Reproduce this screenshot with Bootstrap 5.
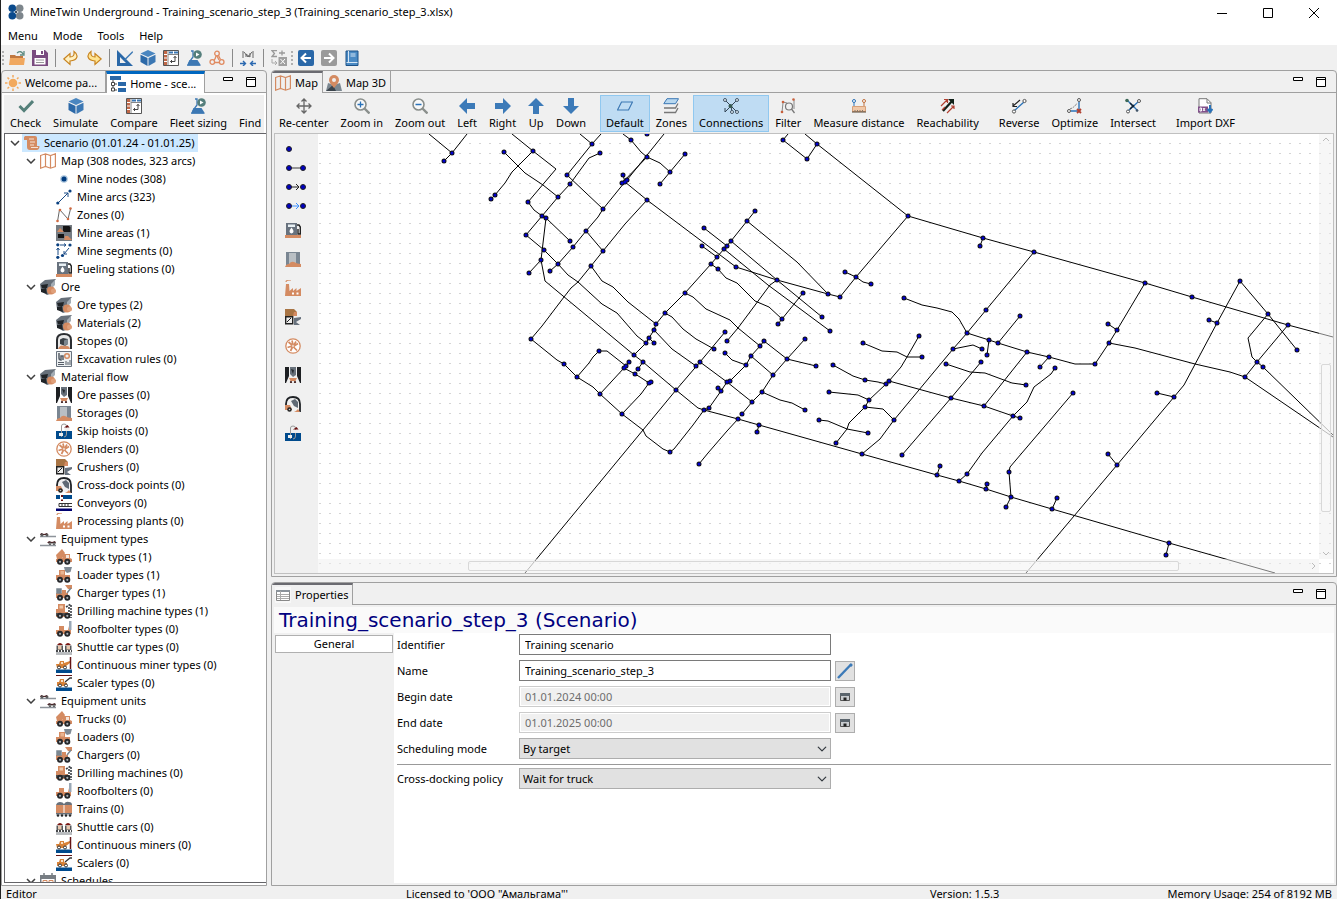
<!DOCTYPE html>
<html lang="en">
<head>
<meta charset="utf-8">
<meta name="viewport" content="width=device-width, initial-scale=1">
<title>MineTwin Underground</title>
<link href="https://cdn.jsdelivr.net/npm/bootstrap@5.3.0/dist/css/bootstrap.min.css" rel="stylesheet">
<style>
:root{--face:#f0f0f0;--edge:#a0a0a0;--accent:#0067c0;--hot:#bfdcf3}
body{font-family:"Noto Sans","Open Sans",sans-serif;font-size:11px;line-height:16px;color:#000;background:var(--face)}
.app{height:100vh;border-left:1px solid #222;overflow:hidden}
button,input,select{font:inherit;color:inherit}
.btn{--bs-btn-font-size:11px;--bs-btn-line-height:16px;--bs-btn-color:#000;--bs-btn-border-radius:0;--bs-btn-padding-x:0;--bs-btn-padding-y:0;--bs-btn-border-width:0}
.ico{width:16px;height:16px;flex:none;display:block}
.titlebar{height:24px;padding-left:7px;gap:6px}
.winbtn{width:46px;height:24px}
.menus{height:21px;padding:3px 0 0 7px;gap:15px}
.menus a{color:#000;text-decoration:none}
.mainbar{height:25px;padding-top:1px}
.mainbar .btn{width:23px;height:24px}
.vsep{width:8px;height:18px;background:linear-gradient(#8a8a8a,#8a8a8a) center/1px 100% no-repeat;flex:none}
.grip{width:4px;height:15px;flex:none;background:repeating-linear-gradient(#b0b0b0 0 2px,transparent 2px 4px) center/2px 100% no-repeat}
.work{gap:4px}
.sidepane{width:266px;flex:none}
.pane{border:1px solid var(--edge);border-radius:4px 4px 0 0;background:var(--face);min-width:0;min-height:0}
.stack{gap:5px}
.mappane{flex:507 1 0}
.proppane{flex:303 1 0}
.tabs-row{height:22px;border-bottom:1px solid var(--edge)}
.tabs-row .tab{height:22px;padding:1px 4px 0 3px;gap:4px;border-right:1px solid var(--edge)}
.sidepane .tabs-row .tab{padding-right:8px}
.tabs-row .tab.on{border-top:2px solid #6a6a70;padding-top:0;background:var(--face)}
.tabs-row .tab.blue{border-top:3px solid var(--accent);border-left:1px solid var(--edge);background:#fff}
.panebtns{gap:11px;padding-right:9px}
.cmdbar{height:40px;padding-top:2px}
.cmdbar .btn{padding:2px 5px 1px;height:37px;display:flex;flex-direction:column;align-items:center;white-space:nowrap;border:1px solid transparent}
.cmdbar .btn .ico{margin-bottom:1px}
.mapbar{padding-left:1px}
.sidepane .cmdbar{border:solid #fff;border-width:2px 2px 0}
.sidepane .cmdbar{padding-top:0}
.cmdbar .btn.on{background:var(--hot);border-color:#90c8f0}
.cmdgap{width:8px;flex:none}
.treebox{border:1px solid #646468;border-right:0;background:#fff;margin:0 0 2px 2px}
.treewrap{background:#fff}
.tree,.tree ul{list-style:none;margin:0;padding:0}
.tree .item{height:18px;display:flex;align-items:center;white-space:nowrap}
.tree .item>.ico{margin-right:5px}
.tree .btn{width:12px;height:16px;margin-right:3px;display:flex;align-items:center;justify-content:center}
.tree{padding-left:4px}
.tree ul{padding-left:16px}
.tree ul ul{padding-left:31px}
.tree .cur{background:#cce8ff;padding:1px 3px 1px 2px;margin-left:-2px;gap:4px}
.mapframe{border:1px solid #c0c0c0;margin:0 2px 2px 2px}
.palette{width:43px;flex:none;padding:5px 0 0 10px}
.palette .btn{height:29px;width:22px;display:flex;align-items:center}
.palette .btn.slim{height:19px}
.canvas{background:#fff;min-width:0}
.vbar{position:absolute;right:0;top:0;bottom:14px;width:14px;background:rgba(240,240,240,.5)}
.hbar{position:absolute;left:0;right:14px;bottom:0;height:14px;background:rgba(240,240,240,.5)}
.thumb{position:absolute;border:1px solid #d8d8d8;border-radius:2px;background:rgba(250,250,250,.5)}
.vbar .thumb{left:2px;right:2px;top:54%;height:35%}
.hbar .thumb{top:2px;bottom:2px;left:15%;width:71%}
.vbar svg,.hbar svg{position:absolute}
.heading{font-family:"DejaVu Sans",sans-serif;font-size:20px;line-height:26px;color:#000080;background:#fafafa;margin:2px 2px 0;padding-left:5px;height:26px}
.propbody{margin:0 0 2px 3px}
.cats{width:119px;flex:none;padding-top:2px}
.cats .btn{border:1px solid #b0b0b0;background:#fff;height:18px;width:118px}
.props{background:#fff;padding:1px 3px 0 3px;margin-right:2px}
.line{display:grid;grid-template-columns:118px 312px 20px;column-gap:4px;height:21px;margin-bottom:5px;align-items:center}
.line .form-control,.line .form-select{height:21px;border:1px solid #7a7a7a;border-radius:0;padding:0 5px;font-size:11px;line-height:16px;color:#000;min-height:0}
.line .form-control:disabled{color:#6d6d6d;background:#f0f0f0;border-color:#ccc;box-shadow:inset 0 0 0 1px #fff}
.line .form-select{background-color:#e1e1e1;border-color:#adadad;padding-left:3px;background-position:right 3px center;background-size:10px 10px}
.line .btn{width:20px;height:20px;background:#e1e1e1;border:1px solid #adadad;display:flex;align-items:center;justify-content:center}
.rule{border:0;border-top:1px solid #999;opacity:1;margin:0 0 3px}
.statusbar{display:grid;grid-template-columns:400fr 524fr 402fr;height:13px;padding:0 5px;white-space:nowrap;line-height:16px}
</style>
</head>
<body>
<svg width="0" height="0" class="position-absolute" aria-hidden="true"><defs>
<symbol id="i-logo" viewBox="0 0 16 16"><g fill="#0a4a8c"><circle cx="4.300" cy="4.300" r="3.800"/><circle cx="4.300" cy="11.700" r="3.800"/></g><g fill="#7d868c"><circle cx="11.700" cy="4.300" r="3.800"/><circle cx="11.700" cy="11.700" r="3.800"/></g><path d="m7 7 2 2M9 7 7 9" stroke="#456"/></symbol>
<symbol id="i-open" viewBox="0 0 16 16"><path d="M1 15V5h5l1 1h7v3z" fill="#c07840"/><path d="M0 15 1 8h15l-1 7z" fill="#f0a860"/><path d="M8 3q4-3 6 1M15 1v4h-4" fill="none" stroke="#5c8a80" stroke-width="1.300"/></symbol>
<symbol id="i-save" viewBox="0 0 16 16"><path d="M0 0h13l3 3v13H0z" fill="#7a4c80"/><path d="M4 0h8v5H4zM2.500 8h11v6.500h-11z" fill="#fff"/><path d="M9 1h2v3H9z" fill="#7a4c80"/><path d="M4 10h8M4 12.500h8" stroke="#999"/></symbol>
<symbol id="i-undo" viewBox="0 0 16 16"><path d="M.800 9 7 3.500V7c3 0 4.500-1.500 4-5.500 4.500 3 4.500 9-4 9.500v3.500z" fill="#fff0c0" stroke="#c88420" stroke-width="1.200"/></symbol>
<symbol id="i-redo" viewBox="0 0 16 16"><path d="M15.200 9 9 3.500V7C6 7 4.500 5.500 5 1.500.500 4.500.500 10.500 9 11v3.500z" fill="#ffe490" stroke="#c88420" stroke-width="1.200"/></symbol>
<symbol id="i-edit" viewBox="0 0 16 16"><path d="M0 0 16 16H0zM3 7v6h6z" fill="#2a68a8" fill-rule="evenodd"/><path d="M15.500 1 8 8.500 6.500 11 9 9.500 16 2.500z" fill="#3c78b4"/></symbol>
<symbol id="i-cube" viewBox="0 0 16 16"><path d="M8 0 15.500 3.500 8 7 .500 3.500z" fill="#4a86c0"/><path d="M.500 4.700 7.500 8v8l-7-4z" fill="#2c69a8"/><path d="M15.500 4.700 8.500 8v8l7-4z" fill="#3c78b4"/></symbol>
<symbol id="i-table" viewBox="0 0 16 16"><path d="M.500.500h15v15H.500z" fill="#fff" stroke="#555"/><path d="M1 1h3v14H1z" fill="#c06848"/><path d="M6 1.500h4v2H6zM11 1.500h4v2h-4z" fill="#3c78b4"/><path d="M1 4.500h3M1 8h3M1 11.500h3" stroke="#fff"/><path d="M5 1v14M5 4.500h10" stroke="#888"/><path d="M12 6v5.500H7.500M10.500 8 12 6.500 13.500 8M9 10l-1.500 1.500L9 13" fill="none" stroke="#444"/></symbol>
<symbol id="i-flask" viewBox="0 0 16 16"><path d="M5 1h2v6l-3 4 -2 4h11l-3-4" fill="none" stroke="#3c78b4" stroke-width="1.300"/><path d="M3.500 10h8l3.500 5.500H1z" fill="#3c78b4"/><circle cx="11.500" cy="4.500" r="4.300" fill="#557f7c"/><path d="M10 2.500v4l3.500-2z" fill="#fff"/></symbol>
<symbol id="i-mol" viewBox="0 0 16 16"><g fill="none" stroke="#e08a60" stroke-width="1.300"><circle cx="8" cy="3.500" r="2.300"/><circle cx="3.300" cy="12" r="2.300"/><circle cx="12.700" cy="12" r="2.300"/><path d="m7 6-1 3M9.500 5.500l2 4M5.500 12.500h5M6 9l-1 1M8 6l2 4"/></g></symbol>
<symbol id="i-nodes" viewBox="0 0 16 16"><path d="M3 1v7M13 1v7M4 2l4 5 4-5M6 7V4l4 3V3" stroke="#666" fill="none"/><path d="M0 13.500h5M3 11l2.500 2.500L3 16M16 13.500h-5M13 11l-2.500 2.500L13 16" stroke="#2a68b0" stroke-width="1.400" fill="none"/></symbol>
<symbol id="i-sigma" viewBox="0 0 16 16"><path d="M6 .700H1L3.500 3.500 1 6.500h5M8 3h6M11 .500v5" fill="none" stroke="#999" stroke-width="1.300"/><path d="M7.500 7H16v9H7.500z" fill="#a0a0a0"/><path d="m9.500 9 4.500 5M14 9l-4.500 5" stroke="#fff"/><path d="M1 9v4h5M4 11l2 2-2 2" fill="none" stroke="#aaa"/></symbol>
<symbol id="i-back" viewBox="0 0 16 16"><rect width="16" height="16" rx="2" fill="#2a68a8"/><path d="M13 8H4M8 3.500 3.500 8 8 12.500" stroke="#fff" stroke-width="2" fill="none"/></symbol>
<symbol id="i-fwd" viewBox="0 0 16 16"><rect width="16" height="16" rx="2" fill="#9a9a9a"/><path d="M3 8h9M8 3.500 12.500 8 8 12.500" stroke="#fff" stroke-width="2" fill="none"/></symbol>
<symbol id="i-book" viewBox="0 0 16 16"><path d="M2 1h12v14.500H2z" fill="#4a8ac4" stroke="#1c5288"/><path d="M2.500 12.500h11M4.500 1v11M6.500 4h5M6.500 6h5" stroke="#d5e6f5"/></symbol>
<symbol id="i-sun" viewBox="0 0 16 16"><circle cx="8" cy="8" r="4.300" fill="#f2a95c"/><path d="M8 0v2.500M8 13.500V16M0 8h2.500M13.500 8H16M2.500 2.500l1.600 1.600M12 12l1.500 1.500M2.500 13.500 4.100 12M12 4l1.500-1.500" stroke="#f2a95c" stroke-width="1.500"/></symbol>
<symbol id="i-home" viewBox="0 0 16 16"><path d="M0 0h11v4H0zM8 6h8v4H8zM8 12h8v4H8z" fill="#2a68a8"/><path d="M3 4v10h4M3 8h4" stroke="#444" fill="none"/><path d="M1.500 6.500h3v3h-3zM1.500 12h3v3h-3z" fill="#fff" stroke="#444"/></symbol>
<symbol id="i-check" viewBox="0 0 16 16"><path d="M1.500 8 6 12.500 15 3" fill="none" stroke="#55807a" stroke-width="3"/></symbol>
<symbol id="i-map" viewBox="0 0 16 16"><path d="M.600 2.500 5.500.800l5 1.700L15.400.800v12.700l-4.900 1.700-5-1.700-4.900 1.700zM5.500.800v12.700M10.500 2.500v12.700" fill="none" stroke="#d48b62" stroke-width="1.200"/></symbol>
<symbol id="i-pin" viewBox="0 0 16 16"><path d="M0 16 2 8l6 2 6-2 2 8z" fill="#7b8790"/><path d="m0 16 7-6 3 6z" fill="#3b444c"/><path d="M8 13C4.500 9 3 7 3 5a5 5 0 0 1 10 0c0 2-1.500 4-5 8z" fill="#d48b62"/><circle cx="8" cy="5" r="2" fill="#f0f0f0"/></symbol>
<symbol id="i-center" viewBox="0 0 16 16"><path d="M8 1v14M1 8h14M5.500 3.500 8 1l2.500 2.500M5.500 12.500 8 15l2.500-2.500M3.500 5.500 1 8l2.500 2.500M12.500 5.500 15 8l-2.500 2.500" fill="none" stroke="#666" stroke-width="1.300"/></symbol>
<symbol id="i-zin" viewBox="0 0 16 16"><circle cx="6.500" cy="6.500" r="5.500" fill="#f8f8f8" stroke="#8a8f8c" stroke-width="1.600"/><path d="m10.500 10.500 5 5" stroke="#8a8f8c" stroke-width="2.400"/><path d="M3.500 6.500h6M6.500 3.500v6" stroke="#2a72b8" stroke-width="1.300"/></symbol>
<symbol id="i-zout" viewBox="0 0 16 16"><circle cx="6.500" cy="6.500" r="5.500" fill="#f8f8f8" stroke="#8a8f8c" stroke-width="1.600"/><path d="m10.500 10.500 5 5" stroke="#8a8f8c" stroke-width="2.400"/><path d="M3.500 6.500h6" stroke="#2a72b8" stroke-width="1.300"/></symbol>
<symbol id="i-arr" viewBox="0 0 16 16"><path d="M0 8 8 0v5h8v6H8v5z" fill="#3c7ab8"/></symbol>
<symbol id="i-para" viewBox="0 0 16 16"><path d="M4.500 4h11l-4 8H.500z" fill="none" stroke="#3c78b4" stroke-width="1.200"/></symbol>
<symbol id="i-layers" viewBox="0 0 16 16"><path d="M4 .700h11.500l-3 5H.800z" fill="#b8d8f0" stroke="#3c78b4"/><path d="m15 5.500-2.500 4.500H1M15 10l-2.500 4.500H1" fill="none" stroke="#777" stroke-width="1.300"/></symbol>
<symbol id="i-conn" viewBox="0 0 16 16"><path d="m2 2 12 12M14 2 2 14M2 10v4M8 8l1 6" stroke="#345" fill="none"/><g fill="#e8f2fa" stroke="#456"><circle cx="2" cy="2" r="1.500"/><circle cx="14" cy="2" r="1.500"/><circle cx="14" cy="14" r="1.500"/><circle cx="9" cy="14" r="1.500"/></g><circle cx="7.500" cy="8" r="2" fill="#365850"/></symbol>
<symbol id="i-filter" viewBox="0 0 16 16"><path d="M2 14 3 5M3 4l4 1M14 2v9" stroke="#888" fill="none"/><circle cx="9" cy="8.500" r="3.500" fill="none" stroke="#777" stroke-width="1.200"/><path d="m11.500 11 3 4" stroke="#777" stroke-width="1.300"/><g fill="#c8603c"><circle cx="2" cy="14" r="1.300"/><circle cx="3" cy="4" r="1.300"/><circle cx="13.500" cy="1.500" r="1.300"/></g></symbol>
<symbol id="i-measure" viewBox="0 0 16 16"><path d="M1.500 8.500h13v5h-13z" fill="#f0c8a8" stroke="#d8a078"/><path d="M1 14h14" stroke="#543"/><path d="M4 14v-2M6.500 14v-2M9 14v-2M11.500 14v-2" stroke="#876"/><path d="M3 8V3" stroke="#2a72b8"/><path d="M13 8V3" stroke="#c0703c"/><circle cx="3" cy="3" r="1.500" fill="#fff" stroke="#2a72b8"/><circle cx="13" cy="3" r="1.500" fill="#fff" stroke="#c0703c"/></symbol>
<symbol id="i-reach" viewBox="0 0 16 16"><path d="M3 13 13 2" stroke="#102018" stroke-width="2.200"/><path d="M8 1h6v6z" fill="#102018"/><path d="m1 8 6-6M4 1.500h3.500V5M7 15l7-7M11 8h3v3M2 12l3-3" stroke="#b04030" fill="none" stroke-width="1.200"/></symbol>
<symbol id="i-rev" viewBox="0 0 16 16"><path d="m3 13 10-9" stroke="#2a72b8" stroke-width="1.300"/><path d="M9 2 2 8M2 5v3.500h4" stroke="#222" fill="none" stroke-width="1.200"/><circle cx="13.500" cy="3" r="1.600" fill="#fff" stroke="#555"/><circle cx="3" cy="13.500" r="1.600" fill="#fff" stroke="#555"/></symbol>
<symbol id="i-opt" viewBox="0 0 16 16"><path d="M12 4v9H4" fill="none" stroke="#2a72b8" stroke-width="1.400"/><path d="M3 11Q8 9 10 5" fill="none" stroke="#777" stroke-dasharray="2 1"/><circle cx="12" cy="2" r="1.500" fill="#fff" stroke="#555"/><circle cx="2" cy="13" r="1.500" fill="#fff" stroke="#555"/><path d="m10 11 4 4M14 11l-4 4" stroke="#b04030" stroke-width="1.800"/></symbol>
<symbol id="i-int" viewBox="0 0 16 16"><path d="m3 3 10 10M13 4 3 13" stroke="#2a72b8" stroke-width="1.300"/><path d="M5 5l4 4M9 7l-4 4" stroke="#123" stroke-width="1.500"/><circle cx="2" cy="2.500" r="1.800" fill="#3d6858"/><circle cx="14" cy="3" r="1.500" fill="#fff" stroke="#555"/><circle cx="3" cy="13.500" r="1.500" fill="#fff" stroke="#555"/><circle cx="12" cy="12.500" r="1.300" fill="#456"/></symbol>
<symbol id="i-dxf" viewBox="0 0 16 16"><path d="M2 .700h8l4 4V15H2z" fill="#fff" stroke="#777"/><path d="M10 1v4h4" fill="none" stroke="#777"/><path d="M1 8.500h10v6H1z" fill="#80508a"/><path d="M3 10v3h1.500V10zM6 10l2 3M8 10l-2 3" stroke="#fff" fill="none"/><path d="M13 7v6M10.500 11l2.500 3 2.500-3" stroke="#2a72b8" stroke-width="2" fill="none"/></symbol>
<symbol id="i-scroll" viewBox="0 0 16 16"><path d="M1 1h10q2 0 2 2v8h2.500q0 4-3 4H6q-3 0-3-3V5H0q-.500-3 1-4z" fill="#d48b62"/><path d="M5 4h5M6 7h5M6 10h4M7 12.500h7" stroke="#f6e2d4"/></symbol>
<symbol id="i-node" viewBox="0 0 16 16"><circle cx="8" cy="8" r="3.800" fill="#a9c4dc"/><circle cx="8" cy="8" r="2.500" fill="#003c80"/></symbol>
<symbol id="i-arc" viewBox="0 0 16 16"><path d="M2 14 12 4M8 4h4v4" fill="none" stroke="#1c4c86"/><circle cx="1.800" cy="14" r="1.600" fill="#0a4080"/><circle cx="14" cy="2" r="1.600" fill="#0a4080"/></symbol>
<symbol id="i-zone" viewBox="0 0 16 16"><path d="M1.500 14.500 3.500 2.500 12 12l2.500-10" fill="none" stroke="#666"/><g fill="#d06a40"><circle cx="1.500" cy="14" r="1.300"/><circle cx="4" cy="3" r="1.300"/><circle cx="12" cy="12" r="1.300"/><circle cx="14.500" cy="1.500" r="1.300"/></g></symbol>
<symbol id="i-area" viewBox="0 0 16 16"><path d="M0 0h16v16H0z" fill="#767c82"/><path d="M7 1h6l1.500 1v5H7zM2 9h6v4H2z" fill="#141414"/><path d="M1 7l3-4 4 4zM8 15l1-4h3l4 4z" fill="#d48b62"/></symbol>
<symbol id="i-seg" viewBox="0 0 16 16"><g stroke="#1c4c86" fill="none"><path d="M4 2h6M8 .500 10 2 8 3.500M2 12V5M.500 7 2 5l1.500 2M13 5l-5 6M8 8v3h3"/></g><g fill="#0a4080"><circle cx="1.800" cy="1.800" r="1.600"/><circle cx="14" cy="2" r="1.600"/><circle cx="6.500" cy="12.500" r="1.600"/><circle cx="1.800" cy="14.300" r="1.600"/></g></symbol>
<symbol id="i-fuel" viewBox="0 0 16 16"><path d="M0 13h16v3H0z" fill="#d48b62"/><path d="M1 1h11v12H1z" fill="#68727e"/><path d="M3 2.500h7V5H3z" fill="#e8f0f4"/><path d="M6.500 5.500q4 5 0 6-4-1 0-6z" fill="#fff"/><path d="M12 3h2l1.300 2v7H13V7" fill="none" stroke="#222" stroke-width="1.400"/></symbol>
<symbol id="i-ore" viewBox="0 0 16 16"><path d="M0 5 5 1l11-1-4 5 1 9-6 2-6-4z" fill="#68717b"/><path d="m1 6 7-1-1 4H2zM1 10l5-1 1 6-6-2z" fill="#202428"/><path d="M11 5l4-4v5l-4 4z" fill="#a3acb4"/><circle cx="11" cy="11.500" r="4" fill="#d48b62"/><circle cx="13.500" cy="12" r="2.500" fill="#e0a07a"/></symbol>
<symbol id="i-stope" viewBox="0 0 16 16"><path d="M1 16V7Q1 1 8 1t7 6v9" fill="#e8e8e8" stroke="#2b2d31" stroke-width="2"/><path d="M4 6.500 7 5l5 1v5l-3 2-5-2z" fill="#3a4046"/><path d="m8 7.500 4-1.500v5l-4 2z" fill="#7c868e"/><path d="M2 16q2-5 6-3 5-1 6 3z" fill="#d48b62"/></symbol>
<symbol id="i-rules" viewBox="0 0 16 16"><path d="M.500.500h15v15H.500z" fill="#edf0f2" stroke="#68727e"/><path d="M3 2v5q0 2 2 2V5h2v4" fill="none" stroke="#555c66" stroke-width="1.500"/><circle cx="11" cy="5" r="2.300" fill="none" stroke="#d48b62" stroke-width="1.500"/><path d="M2 11.500h6M2 13.500h6M10 10v4M12 11v3M14 9v5" stroke="#555c66"/></symbol>
<symbol id="i-pass" viewBox="0 0 16 16"><path d="M0 0h4v9L1 16H0zM16 0h-4v9l3 7h1z" fill="#1d1f22"/><path d="M5 0h6v8l-3 2-3-3z" fill="#68717b"/><path d="m6 2 3 1-1 4z" fill="#252a30"/><path d="M4 11h8l-1.500 3h-5z" fill="#d48b62"/><circle cx="6" cy="15" r="1.100" fill="#422"/><circle cx="10" cy="15" r="1.100" fill="#422"/></symbol>
<symbol id="i-stor" viewBox="0 0 16 16"><path d="M1 1h14v13H1z" fill="#7a8692"/><path d="M4 2h7v11H4z" fill="#b9bfc4"/><path d="M0 16q1-3 4-3 2-3 5-2 3 2 7 2v3z" fill="#d48b62"/></symbol>
<symbol id="i-skip" viewBox="0 0 16 16"><path d="M0 8h16v8H0z" fill="#004a8c"/><path d="M5.500 14V3q0-2 2.500-2t2.500 2v8q0 3-2.500 3" fill="none" stroke="#999"/><path d="M8.500 5h5v3h-5zM3 10h4v3H3z" fill="#eee"/><path d="M8 4.500h5.500L11.500 2z" fill="#6a1010"/></symbol>
<symbol id="i-fan" viewBox="0 0 16 16"><circle cx="8" cy="8" r="7.200" fill="#fff" stroke="#d48b62" stroke-width="1.300"/><g stroke="#d48b62" stroke-width="1.700"><path d="M8 7 7 2.500M9 8l4-2.500M8.500 9l3.500 3.500M7.500 9l-2 4M7 8l-4.500 1.500M7 7 3.500 4M9 7l2-3.500"/></g><circle cx="8" cy="8" r="1.400" fill="#fff" stroke="#d48b62"/></symbol>
<symbol id="i-crush" viewBox="0 0 16 16"><path d="M0 0h9l3 3v4H0z" fill="#a87444"/><path d="M9 3h3v4H8z" fill="#d48b62"/><path d="M.700 7.700h7v7h-7z" fill="#eee" stroke="#222" stroke-width="1.400"/><path d="m2 13 4-4" stroke="#222"/><path d="m9 9 7-1v2l-5 3 4 3H9z" fill="#68727e"/></symbol>
<symbol id="i-dock" viewBox="0 0 16 16"><path d="M1 14V8q0-7 7-7t7 7v8" fill="#f1f1f1" stroke="#1f2226" stroke-width="1.800"/><path d="M6 5l4-2 3 3v6l-4-2z" fill="#606a75"/><path d="M0 9h5l2 5H0zM11 15l2-2 2 3H9z" fill="#d48b62"/><circle cx="4.500" cy="13.500" r="2.300" fill="#222"/><circle cx="4.500" cy="13.500" r=".8" fill="#ccc"/></symbol>
<symbol id="i-conv" viewBox="0 0 16 16"><path d="M0 0h16v4H0z" fill="#004a8c"/><path d="M4 0h3v4H4z" fill="#fff"/><path d="M5 0h2v2H5zM5 4.500h2V6H5z" fill="#6a1010"/><path d="M0 13.500h16V16H0z" fill="#000070"/><path d="M3 8.500h13M3 11.500h13M3 8.500v3M6 9v2M9 9v2M12 9v2" stroke="#333"/></symbol>
<symbol id="i-plant" viewBox="0 0 16 16"><path d="M0 16 1 4h3l.500 7L8 8v3l3.500-3v3L16 8v8z" fill="#d48b62"/><path d="M1 2q0-2 5-2" stroke="#d48b62" stroke-width="1.200" fill="none"/><path d="M7 12.500h2v2H7zM11.500 12.500h2v2h-2z" fill="#fff"/></symbol>
<symbol id="i-equip" viewBox="0 0 16 16"><path d="M0 5.500h16M0 14.500h16" stroke="#8d939a" stroke-width="1.600"/><path d="m0 4 1-2 3 1 3-1 1 2zM7 12l2-2 3 1 3-1 1 2z" fill="#50262a"/><g fill="#ddd" stroke="#333"><circle cx="2" cy="4" r="1"/><circle cx="7" cy="4" r="1"/><circle cx="10" cy="12.500" r="1"/><circle cx="14" cy="12.500" r="1"/></g></symbol>
<symbol id="i-wheels" viewBox="0 0 16 16"><g fill="#26282b"><circle cx="4" cy="12.800" r="3"/><circle cx="11.300" cy="12.800" r="3"/></g><g fill="#a9b0b6"><circle cx="4" cy="12.800" r="1.100"/><circle cx="11.300" cy="12.800" r="1.100"/></g></symbol>
<symbol id="i-truck" viewBox="0 0 16 16"><path d="m0 6 6-6 3 4-3 6H1zM7 5h7v4l2 1v3H0v-3l7-1z" fill="#d48b62"/><path d="M10 6h3v3h-3z" fill="#f4e6dc"/><use href="#i-wheels" width="16" height="16"/></symbol>
<symbol id="i-load" viewBox="0 0 16 16"><path d="M8 0h8l-1.500 5L11 6 9 4z" fill="#808b95"/><path d="M3 3h6v5h5v5H0V8h3z" fill="#d48b62"/><path d="M4.500 4H8v3.500H4.500z" fill="#e9b592"/><use href="#i-wheels" width="16" height="16"/></symbol>
<symbol id="i-charg" viewBox="0 0 16 16"><path d="M9 0h7v4h-4zM0 8h12v5H0zM6 5h4v4H6z" fill="#d48b62"/><path d="M1 4h4v4H1zM11 8l4-5" fill="#7b8790" stroke="#7b8790" stroke-width="1.500"/><use href="#i-wheels" width="16" height="16"/></symbol>
<symbol id="i-drill" viewBox="0 0 16 16"><path d="M2 1h7v8h3v5H0V6h2z" fill="#d48b62"/><path d="M3.500 2.500H7v3H3.500z" fill="#f0c8aa"/><path d="M0 10h11v3H0z" fill="#55504e"/><path d="M10 4l5-3M13 4v11M15 2v13" stroke="#3a3f45" stroke-width="1.600" stroke-dasharray="2 1"/><use href="#i-wheels" width="16" height="16"/></symbol>
<symbol id="i-roof" viewBox="0 0 16 16"><path d="M3 5h5v4h4l1-4h2v8H0V9h3z" fill="#d48b62"/><path d="M13 0h2.500v9H13z" fill="#9aa8b6"/><use href="#i-wheels" width="16" height="16"/></symbol>
<symbol id="i-shut" viewBox="0 0 16 16"><path d="M0 13h16v3H0z" fill="#b9bcbf"/><path d="M1 6q3-4 6 0zM9 6q3-4 6 0z" fill="#7a1814"/><path d="M.500 6.500H7V11H.500zM9 6.500h6.500V11H9z" fill="#54585c"/><path d="M2 6.500h3.500v4H2zM10.500 6.500H14v4h-3.500z" fill="#e8c8b0"/><path d="M0 12h16" stroke="#46484b" stroke-width="2" stroke-dasharray="2 1"/></symbol>
<symbol id="i-cont" viewBox="0 0 16 16"><path d="M0 12.500h16V16H0z" fill="#004a8c"/><path d="M0 7h3l1-3h4v2l6-2v2l-4 3v2H1z" fill="#d88238"/><path d="M5 5h2v2H5z" fill="#f8e0c8"/><path d="M14.500 0v12" stroke="#641414" stroke-width="1.500"/><g fill="#fff" stroke="#333"><circle cx="3" cy="10.500" r="1.500"/><circle cx="9" cy="10.500" r="1.500"/></g></symbol>
<symbol id="i-scal" viewBox="0 0 16 16"><path d="M0 12.500h16V16H0z" fill="#004a8c"/><path d="M0 .500h16" stroke="#641414"/><path d="M1 7h2l1-3h4v3l3 1v3H1z" fill="#d88238"/><path d="M5 5h2v2H5z" fill="#f8e0c8"/><path d="m9 7 5-4h2" stroke="#333" stroke-width="1.300" fill="none"/><g fill="#fff" stroke="#333"><circle cx="4" cy="10.500" r="1.500"/><circle cx="10" cy="10.500" r="1.500"/></g></symbol>
<symbol id="i-train" viewBox="0 0 16 16"><path d="M0 4h7.500v8H0zM8.500 4H16v8H8.500z" fill="#d48b62"/><path d="M0 4q1-3 4-3t4 2q2-3 5-2 3 0 3 3z" fill="#68717b"/><path d="M0 12h16v1.500H0z" fill="#68717b"/><g fill="#26282b"><circle cx="2" cy="14.500" r="1.300"/><circle cx="6" cy="14.500" r="1.300"/><circle cx="10" cy="14.500" r="1.300"/><circle cx="14" cy="14.500" r="1.300"/></g></symbol>
<symbol id="i-sched" viewBox="0 0 16 16"><path d="M0 2h16v14H0z" fill="#777d83"/><path d="M1.500 6h13v9h-13z" fill="#fff"/><path d="M3 7.500h4v4H3zM9 7.500h4v4H9z" fill="none" stroke="#d48b62"/><path d="M4 0v4M12 0v4" stroke="#777d83" stroke-width="1.500"/></symbol>
<symbol id="i-min" viewBox="0 0 12 12"><path d="M1.500 1.500h9v3h-9z" fill="#fff" stroke="#000"/></symbol>
<symbol id="i-max" viewBox="0 0 12 12"><path d="M1.500 1.500h9v9h-9zM1.500 3.500h9" fill="#fff" stroke="#000"/></symbol>
<symbol id="i-exp" viewBox="0 0 10 6"><path d="m1 1 4 4 4-4" fill="none" stroke="#404040" stroke-width="1.500"/></symbol>
<symbol id="i-grid" viewBox="0 0 16 16"><path d="M0 0h16v16H0z" fill="#f8f8f8"/><path d="M1.500 3.500h13v10h-13z" fill="#fff" stroke="#888"/><path d="M1 3h14v2H1z" fill="#8a929a"/><path d="M2 7.500h12M2 9.500h12M2 11.500h12M5.500 4v9" stroke="#aaa"/></symbol>
<symbol id="i-pencil" viewBox="0 0 16 16"><path d="M1 15 13.500 2" stroke="#3c7ab8" stroke-width="2.400"/><path d="m13 1 2 2" stroke="#3c7ab8" stroke-width="2.500"/></symbol>
<symbol id="i-cal" viewBox="0 0 16 16"><path d="M3.500 4.500h9v7h-9z" fill="#c8ccd0" stroke="#555"/><path d="M3 4h10v3H3z" fill="#5a646c"/><path d="M6.500 8.500h3v3h-3z" fill="#222"/></symbol>
<pattern id="dots" x="319" y="143" width="10" height="10" patternUnits="userSpaceOnUse"><rect width="2" height="1" fill="#d4d4d4"/></pattern>
<path id="pts" fill="none" stroke-linecap="round" d="M452 153h0M444 161h0M504 152h0M533 151h0M495 195h0M491 199h0M528 202h0M558 197h0M570 184h0M567 175h0M600 153h0M592 144h0M542 216h0M546 218h0M526 235h0M544 250h0M541 260h0M529 273h0M550 271h0M558 264h0M573 247h0M570 241h0M586 231h0M603 209h0M603 251h0M591 266h0M531 339h0M564 364h0M577 377h0M599 351h0M600 394h0M631 140h0M647 134h0M647 157h0M685 154h0M670 172h0M660 184h0M623 175h0M622 183h0M625 182h0M627 180h0M647 200h0M755 211h0M747 221h0M704 228h0M702 246h0M731 241h0M727 246h0M724 249h0M717 257h0M711 264h0M718 269h0M736 267h0M777 280h0M828 294h0M840 297h0M856 277h0M845 272h0M871 284h0M803 293h0M782 319h0M778 324h0M822 317h0M830 331h0M685 293h0M665 313h0M656 324h0M654 330h0M649 338h0M646 343h0M654 343h0M634 355h0M643 362h0M629 362h0M626 366h0M624 368h0M635 374h0M638 369h0M649 383h0M651 382h0M622 414h0M676 390h0M725 332h0M727 341h0M714 349h0M700 362h0M696 366h0M725 353h0M746 365h0M760 346h0M764 341h0M751 356h0M727 382h0M730 381h0M718 388h0M721 391h0M704 410h0M709 408h0M670 452h0M699 464h0M738 419h0M742 414h0M752 402h0M762 392h0M773 375h0M787 359h0M805 339h0M816 366h0M805 410h0M759 425h0M757 432h0M783 140h0M807 159h0M817 144h0M908 216h0M904 298h0M863 343h0M919 336h0M922 357h0M833 365h0M865 380h0M886 384h0M889 381h0M829 392h0M869 400h0M865 407h0M894 420h0M819 420h0M868 433h0M836 443h0M862 454h0M902 455h0M937 475h0M940 466h0M967 474h0M946 364h0M953 349h0M951 398h0M967 333h0M983 238h0M980 246h0M1034 252h0M986 310h0M989 340h0M998 343h0M987 355h0M982 349h0M1020 316h0M1027 352h0M1049 357h0M1040 367h0M1055 368h0M1095 364h0M1108 324h0M1117 330h0M1109 343h0M1145 283h0M1192 297h0M1240 281h0M1209 320h0M1217 323h0M1268 314h0M1288 325h0M1297 350h0M1257 362h0M1263 367h0M1245 377h0M981 362h0M1026 385h0M984 406h0M1013 416h0M1020 418h0M1073 393h0M1157 393h0M1174 397h0M1108 454h0M1117 465h0M1009 472h0M959 481h0M986 489h0M987 484h0M1011 497h0M1006 507h0M1052 509h0M1057 498h0M1169 543h0M1166 555h0"/>
</defs></svg>

<div class="app d-flex flex-column">
<header class="bg-white">
<div class="titlebar d-flex align-items-center">
<svg class="ico"><use href="#i-logo"/></svg><span class="me-auto">MineTwin Underground - Training_scenario_step_3 (Training_scenario_step_3.xlsx)</span>
<div class="d-flex">
<button class="btn winbtn" aria-label="Minimize"><svg width="12" height="12"><path d="M1 6.500h10" stroke="#000"/></svg></button>
<button class="btn winbtn" aria-label="Maximize"><svg width="12" height="12"><path d="M1.500 1.500h9v9h-9z" fill="none" stroke="#000"/></svg></button>
<button class="btn winbtn" aria-label="Close"><svg width="12" height="12"><path d="m1 1 10 10M11 1 1 11" stroke="#000"/></svg></button>
</div>
</div>
<nav class="menus d-flex align-items-center"><a href="#">Menu</a><a href="#">Mode</a><a href="#">Tools</a><a href="#">Help</a></nav>
</header>
<div class="mainbar d-flex align-items-center" role="toolbar" aria-label="Main"><span class="grip"></span>
<button class="btn" aria-label="Open"><svg class="ico mx-auto"><use href="#i-open"/></svg></button>
<button class="btn" aria-label="Save"><svg class="ico mx-auto"><use href="#i-save"/></svg></button><span class="vsep"></span>
<button class="btn" aria-label="Undo"><svg class="ico mx-auto"><use href="#i-undo"/></svg></button>
<button class="btn" aria-label="Redo"><svg class="ico mx-auto"><use href="#i-redo"/></svg></button><span class="vsep"></span>
<button class="btn" aria-label="Editor"><svg class="ico mx-auto"><use href="#i-edit"/></svg></button>
<button class="btn" aria-label="Simulation"><svg class="ico mx-auto"><use href="#i-cube"/></svg></button>
<button class="btn" aria-label="Comparison"><svg class="ico mx-auto"><use href="#i-table"/></svg></button>
<button class="btn" aria-label="Fleet"><svg class="ico mx-auto"><use href="#i-flask"/></svg></button>
<button class="btn" aria-label="Cluster"><svg class="ico mx-auto"><use href="#i-mol"/></svg></button><span class="vsep"></span>
<button class="btn" aria-label="Merge nodes"><svg class="ico mx-auto"><use href="#i-nodes"/></svg></button><span class="vsep"></span>
<button class="btn" aria-label="Formulas"><svg class="ico mx-auto"><use href="#i-sigma"/></svg></button><span class="grip"></span>
<button class="btn" aria-label="Back"><svg class="ico mx-auto"><use href="#i-back"/></svg></button>
<button class="btn" aria-label="Forward"><svg class="ico mx-auto"><use href="#i-fwd"/></svg></button>
<button class="btn" aria-label="Manual"><svg class="ico mx-auto"><use href="#i-book"/></svg></button>
</div>

<div class="work d-flex flex-grow-1 overflow-hidden">
<aside class="pane sidepane d-flex flex-column overflow-hidden">
<div class="tabs-row d-flex flex-shrink-0">
<button class="btn tab d-flex align-items-center"><svg class="ico"><use href="#i-sun"/></svg>Welcome pa...</button>
<button class="btn tab blue on d-flex align-items-center"><svg class="ico"><use href="#i-home"/></svg>Home - sce...</button>
<div class="panebtns d-flex align-items-center ms-auto"><button class="btn d-flex" aria-label="Minimize pane"><svg width="12" height="12"><use href="#i-min"/></svg></button><button class="btn d-flex" aria-label="Maximize pane"><svg width="12" height="12"><use href="#i-max"/></svg></button></div>
</div>
<div class="cmdbar d-flex align-items-start flex-shrink-0 overflow-hidden">
<button class="btn"><svg class="ico"><use href="#i-check"/></svg>Check</button>
<button class="btn"><svg class="ico"><use href="#i-cube"/></svg>Simulate</button>
<button class="btn"><svg class="ico"><use href="#i-table"/></svg>Compare</button>
<button class="btn"><svg class="ico"><use href="#i-flask"/></svg>Fleet sizing</button>
<button class="btn"><svg class="ico"></svg>Find</button>
</div>
<div class="treewrap d-flex flex-column flex-grow-1 overflow-hidden">
<div class="treebox flex-grow-1 overflow-hidden">
<ul class="tree" role="tree">
<li><div class="item"><button class="btn" aria-label="Collapse"><svg width="10" height="6"><use href="#i-exp"/></svg></button><span class="cur d-flex align-items-center"><svg class="ico"><use href="#i-scroll"/></svg>Scenario (01.01.24 - 01.01.25)</span></div>
<ul>
<li><div class="item"><button class="btn" aria-label="Collapse"><svg width="10" height="6"><use href="#i-exp"/></svg></button><svg class="ico"><use href="#i-map"/></svg>Map (308 nodes, 323 arcs)</div>
<ul>
<li class="item"><svg class="ico"><use href="#i-node"/></svg>Mine nodes (308)</li>
<li class="item"><svg class="ico"><use href="#i-arc"/></svg>Mine arcs (323)</li>
<li class="item"><svg class="ico"><use href="#i-zone"/></svg>Zones (0)</li>
<li class="item"><svg class="ico"><use href="#i-area"/></svg>Mine areas (1)</li>
<li class="item"><svg class="ico"><use href="#i-seg"/></svg>Mine segments (0)</li>
<li class="item"><svg class="ico"><use href="#i-fuel"/></svg>Fueling stations (0)</li>
</ul></li>
<li><div class="item"><button class="btn" aria-label="Collapse"><svg width="10" height="6"><use href="#i-exp"/></svg></button><svg class="ico"><use href="#i-ore"/></svg>Ore</div>
<ul>
<li class="item"><svg class="ico"><use href="#i-ore"/></svg>Ore types (2)</li>
<li class="item"><svg class="ico"><use href="#i-ore"/></svg>Materials (2)</li>
<li class="item"><svg class="ico"><use href="#i-stope"/></svg>Stopes (0)</li>
<li class="item"><svg class="ico"><use href="#i-rules"/></svg>Excavation rules (0)</li>
</ul></li>
<li><div class="item"><button class="btn" aria-label="Collapse"><svg width="10" height="6"><use href="#i-exp"/></svg></button><svg class="ico"><use href="#i-ore"/></svg>Material flow</div>
<ul>
<li class="item"><svg class="ico"><use href="#i-pass"/></svg>Ore passes (0)</li>
<li class="item"><svg class="ico"><use href="#i-stor"/></svg>Storages (0)</li>
<li class="item"><svg class="ico"><use href="#i-skip"/></svg>Skip hoists (0)</li>
<li class="item"><svg class="ico"><use href="#i-fan"/></svg>Blenders (0)</li>
<li class="item"><svg class="ico"><use href="#i-crush"/></svg>Crushers (0)</li>
<li class="item"><svg class="ico"><use href="#i-dock"/></svg>Cross-dock points (0)</li>
<li class="item"><svg class="ico"><use href="#i-conv"/></svg>Conveyors (0)</li>
<li class="item"><svg class="ico"><use href="#i-plant"/></svg>Processing plants (0)</li>
</ul></li>
<li><div class="item"><button class="btn" aria-label="Collapse"><svg width="10" height="6"><use href="#i-exp"/></svg></button><svg class="ico"><use href="#i-equip"/></svg>Equipment types</div>
<ul>
<li class="item"><svg class="ico"><use href="#i-truck"/></svg>Truck types (1)</li>
<li class="item"><svg class="ico"><use href="#i-load"/></svg>Loader types (1)</li>
<li class="item"><svg class="ico"><use href="#i-charg"/></svg>Charger types (1)</li>
<li class="item"><svg class="ico"><use href="#i-drill"/></svg>Drilling machine types (1)</li>
<li class="item"><svg class="ico"><use href="#i-roof"/></svg>Roofbolter types (0)</li>
<li class="item"><svg class="ico"><use href="#i-shut"/></svg>Shuttle car types (0)</li>
<li class="item"><svg class="ico"><use href="#i-cont"/></svg>Continuous miner types (0)</li>
<li class="item"><svg class="ico"><use href="#i-scal"/></svg>Scaler types (0)</li>
</ul></li>
<li><div class="item"><button class="btn" aria-label="Collapse"><svg width="10" height="6"><use href="#i-exp"/></svg></button><svg class="ico"><use href="#i-equip"/></svg>Equipment units</div>
<ul>
<li class="item"><svg class="ico"><use href="#i-truck"/></svg>Trucks (0)</li>
<li class="item"><svg class="ico"><use href="#i-load"/></svg>Loaders (0)</li>
<li class="item"><svg class="ico"><use href="#i-charg"/></svg>Chargers (0)</li>
<li class="item"><svg class="ico"><use href="#i-drill"/></svg>Drilling machines (0)</li>
<li class="item"><svg class="ico"><use href="#i-roof"/></svg>Roofbolters (0)</li>
<li class="item"><svg class="ico"><use href="#i-train"/></svg>Trains (0)</li>
<li class="item"><svg class="ico"><use href="#i-shut"/></svg>Shuttle cars (0)</li>
<li class="item"><svg class="ico"><use href="#i-cont"/></svg>Continuous miners (0)</li>
<li class="item"><svg class="ico"><use href="#i-scal"/></svg>Scalers (0)</li>
</ul></li>
<li><div class="item"><button class="btn" aria-label="Collapse"><svg width="10" height="6"><use href="#i-exp"/></svg></button><svg class="ico"><use href="#i-sched"/></svg>Schedules</div></li>
</ul></li>
</ul>
</div>
</div>
</aside>

<main class="stack d-flex flex-column flex-grow-1 overflow-hidden">
<section class="pane mappane d-flex flex-column overflow-hidden">
<div class="tabs-row d-flex flex-shrink-0">
<button class="btn tab on d-flex align-items-center"><svg class="ico"><use href="#i-map"/></svg>Map</button>
<button class="btn tab d-flex align-items-center"><svg class="ico"><use href="#i-pin"/></svg>Map 3D</button>
<div class="panebtns d-flex align-items-center ms-auto"><button class="btn d-flex" aria-label="Minimize pane"><svg width="12" height="12"><use href="#i-min"/></svg></button><button class="btn d-flex" aria-label="Maximize pane"><svg width="12" height="12"><use href="#i-max"/></svg></button></div>
</div>
<div class="cmdbar mapbar d-flex align-items-start flex-shrink-0 overflow-hidden">
<button class="btn"><svg class="ico"><use href="#i-center"/></svg>Re-center</button>
<button class="btn"><svg class="ico"><use href="#i-zin"/></svg>Zoom in</button>
<button class="btn"><svg class="ico"><use href="#i-zout"/></svg>Zoom out</button>
<button class="btn"><svg class="ico"><use href="#i-arr"/></svg>Left</button>
<button class="btn"><svg class="ico" viewBox="0 0 16 16"><use href="#i-arr" transform="rotate(180 8 8)"/></svg>Right</button>
<button class="btn"><svg class="ico" viewBox="0 0 16 16"><use href="#i-arr" transform="rotate(90 8 8)"/></svg>Up</button>
<button class="btn"><svg class="ico" viewBox="0 0 16 16"><use href="#i-arr" transform="rotate(270 8 8)"/></svg>Down</button><span class="cmdgap"></span>
<button class="btn on"><svg class="ico"><use href="#i-para"/></svg>Default</button>
<button class="btn"><svg class="ico"><use href="#i-layers"/></svg>Zones</button>
<button class="btn on"><svg class="ico"><use href="#i-conn"/></svg>Connections</button>
<button class="btn"><svg class="ico"><use href="#i-filter"/></svg>Filter</button>
<button class="btn"><svg class="ico"><use href="#i-measure"/></svg>Measure distance</button>
<button class="btn"><svg class="ico"><use href="#i-reach"/></svg>Reachability</button><span class="cmdgap"></span>
<button class="btn"><svg class="ico"><use href="#i-rev"/></svg>Reverse</button>
<button class="btn"><svg class="ico"><use href="#i-opt"/></svg>Optimize</button>
<button class="btn"><svg class="ico"><use href="#i-int"/></svg>Intersect</button><span class="cmdgap"></span>
<button class="btn"><svg class="ico"><use href="#i-dxf"/></svg>Import DXF</button>
</div>
<div class="mapframe d-flex flex-grow-1 overflow-hidden">
<div class="palette d-flex flex-column">
<button class="btn slim" aria-label="Node"><svg width="22" height="8"><circle cx="4" cy="4" r="2.500" fill="#0000c0" stroke="#222"/></svg></button>
<button class="btn slim" aria-label="Segment"><svg width="22" height="8"><path d="M4 4h14" stroke="#777" stroke-width="1.500"/><circle cx="4" cy="4" r="2.500" fill="#0000c0" stroke="#222"/><circle cx="18" cy="4" r="2.500" fill="#0000c0" stroke="#222"/></svg></button>
<button class="btn slim" aria-label="One-way arc"><svg width="22" height="8"><path d="M6 4h8M11 1l3 3-3 3" stroke="#222" fill="none"/><circle cx="4" cy="4" r="2.500" fill="#0000c0" stroke="#222"/><circle cx="18" cy="4" r="2.500" fill="#0000c0" stroke="#222"/></svg></button>
<button class="btn slim" aria-label="Route arc"><svg width="22" height="8"><path d="M6 4h8M11 1l3 3-3 3" stroke="#3c90ff" fill="none"/><circle cx="4" cy="4" r="2.500" fill="#0000c0" stroke="#222"/><circle cx="18" cy="4" r="2.500" fill="#0000c0" stroke="#222"/></svg></button>
<button class="btn" aria-label="Fueling station"><svg class="ico"><use href="#i-fuel"/></svg></button>
<button class="btn" aria-label="Storage"><svg class="ico"><use href="#i-stor"/></svg></button>
<button class="btn" aria-label="Processing plant"><svg class="ico"><use href="#i-plant"/></svg></button>
<button class="btn" aria-label="Crusher"><svg class="ico"><use href="#i-crush"/></svg></button>
<button class="btn" aria-label="Blender"><svg class="ico"><use href="#i-fan"/></svg></button>
<button class="btn" aria-label="Ore pass"><svg class="ico"><use href="#i-pass"/></svg></button>
<button class="btn" aria-label="Cross-dock point"><svg class="ico"><use href="#i-dock"/></svg></button>
<button class="btn" aria-label="Skip hoist"><svg class="ico"><use href="#i-skip"/></svg></button>
</div>
<div class="canvas flex-grow-1 position-relative overflow-hidden">
<svg width="100%" height="100%" class="position-absolute top-0 start-0" role="img" aria-label="Mine map">
<g transform="translate(-318 -134)">
<rect x="318" y="134" width="3000" height="2000" fill="url(#dots)"/>
<path fill="none" stroke="#000" d="M429 134 452 153 467 134M452 153 444 161M512 134 533 151 556 169 528 202 534 210 542 216M533 151 512 172 505 183 495 195 491 199M504 152 525 173 543 185 558 197M580 134 592 144 601 134M592 144 567 175 603 209M600 153 589 158 570 184 558 197 542 216 526 235 544 250 558 264 568 275 578 282 602 304 617 313 637 336 646 343M542 216 546 218 570 241M546 218 541 260 545 281 634 355 643 362 676 390 698 408 704 410M541 260 529 273M550 271 558 264 573 247 586 231 598 217 603 209 620 188 625 182M586 231 603 251 591 266 578 282 571 288 564 297 542 326 531 339 557 360 564 364 577 377 585 382 593 387 600 394 622 414 643 430 646 436 663 449 670 452 674 449 693 425 704 410M603 251 625 224 647 200M591 266 602 281 613 287 628 302 656 324M577 377 589 363 593 357 599 351 607 351 626 366M600 394 624 368 635 374 640 377 649 383 641 394 622 414M624 368 629 362M634 355 646 343 649 338 654 330 656 324 665 313 685 293 711 264 717 257 724 249 731 241 747 221 755 211M649 338 654 343M643 362 638 369M623 134 631 140 641 152 647 157 660 163 670 172 685 154M670 172 660 184M647 157 622 183M664 134 627 180M623 175 625 182 647 200 736 267 777 280 828 294 840 297 856 277 908 216 817 144 805 134M788 134 783 140 807 159 817 144M845 272 856 277 863 282 871 284M747 221 797 262 828 294M731 241 777 280 822 317M704 228 727 246M702 246 717 257M724 249 768 285 830 331M711 264 718 269 726 278 737 283 755 301 769 307 782 319 778 324M782 319 803 293M777 280 770 285 738 328 727 341M685 293 693 297 706 309 730 320 738 328 760 346M665 313 672 317 683 329 696 339 714 349M654 330 672 349 696 366M725 332 700 362 676 390 525 573M700 362 727 382 752 402M764 341 760 346 751 356 746 365 730 381 727 382 721 391 709 408 704 410M718 388 721 391M725 353 732 360 746 365M764 341 787 359 805 339M816 366 787 359 773 375 762 392 752 402 742 414M751 356 773 375M762 392 780 400 792 403 805 410M704 410 738 419 759 425 862 454 937 475 959 481 986 489 1011 497 1052 509 1169 543 1275 573M738 419 727 431 708 453 699 464M759 425 757 432M836 443 847 429 849 423 865 407 869 400 886 384 889 381 901 367 907 357 919 336M863 343 882 351 897 352 907 357 922 357M833 365 853 376 865 380 878 382 886 384M829 392 858 395 869 400M865 407 883 409 894 420M819 420 828 421 847 429 868 433M862 454 880 439 894 420 953 349 967 333 986 310 1034 252M889 381 951 398 984 406 1013 416 1020 418M904 298 922 305 937 308 952 312 959 319 967 333 989 340 998 343 1027 352 1049 357 1075 364 1095 364 1109 343 1117 330 1145 283M1117 330 1108 324M998 343 1020 316M989 340 987 355M953 349 973 345 982 349M946 364 970 372 985 373 1012 383 1026 385M981 362 951 398 902 455M1027 352 984 406M1055 368 1051 374 1034 387 1027 402 1013 416 982 453 967 474 959 481M1049 357 1040 367M937 475 940 466M986 489 987 484M1073 393 1010 467 1009 472 1011 497 1006 507M1052 509 1057 498M1169 543 1166 555M908 216 983 238 1034 252 1145 283 1192 297 1288 325 1333 337 1900 500M983 238 980 246M1109 343 1135 348 1195 364 1230 372 1245 377 1333 437M1245 377 1257 362 1288 325M1257 362 1263 367 1333 435M1257 362 1252 357 1248 338 1268 314 1240 281 1217 323 1184 385 1174 397 1117 465 1026 573M1217 323 1209 320M1268 314 1297 350M1174 397 1157 393M1117 465 1108 454"/>
<use href="#pts" stroke="#111" stroke-width="5"/>
<use href="#pts" stroke="#0000d0" stroke-width="3"/>
</g>
</svg>
<div class="vbar"><svg class="top-0 start-0" width="14" height="12"><path d="m4 7 3-3 3 3" fill="none" stroke="#bbb"/></svg><div class="thumb"></div><svg class="bottom-0 start-0" width="14" height="12"><path d="m4 5 3 3 3-3" fill="none" stroke="#bbb"/></svg></div>
<div class="hbar"><div class="thumb"></div><svg class="end-0 top-0" width="12" height="14"><path d="m5 4 3 3-3 3" fill="none" stroke="#bbb"/></svg></div>
</div>
</div>
</section>

<section class="pane proppane d-flex flex-column overflow-hidden">
<div class="tabs-row d-flex flex-shrink-0">
<button class="btn tab on d-flex align-items-center"><svg class="ico"><use href="#i-grid"/></svg>Properties</button>
<div class="panebtns d-flex align-items-center ms-auto"><button class="btn d-flex" aria-label="Minimize pane"><svg width="12" height="12"><use href="#i-min"/></svg></button><button class="btn d-flex" aria-label="Maximize pane"><svg width="12" height="12"><use href="#i-max"/></svg></button></div>
</div>
<h1 class="heading fw-normal flex-shrink-0">Training_scenario_step_3 (Scenario)</h1>
<div class="propbody d-flex flex-grow-1 overflow-hidden">
<div class="cats"><button class="btn">General</button></div>
<form class="props flex-grow-1">
<div class="line"><label for="fid">Identifier</label><input class="form-control" id="fid" value="Training scenario"></div>
<div class="line"><label for="fname">Name</label><input class="form-control" id="fname" value="Training_scenario_step_3"><button type="button" class="btn" aria-label="Edit name"><svg class="ico"><use href="#i-pencil"/></svg></button></div>
<div class="line"><label for="fbeg">Begin date</label><input class="form-control" id="fbeg" value="01.01.2024 00:00" disabled><button type="button" class="btn" aria-label="Pick begin date"><svg class="ico"><use href="#i-cal"/></svg></button></div>
<div class="line"><label for="fend">End date</label><input class="form-control" id="fend" value="01.01.2025 00:00" disabled><button type="button" class="btn" aria-label="Pick end date"><svg class="ico"><use href="#i-cal"/></svg></button></div>
<div class="line"><label for="fmode">Scheduling mode</label><select class="form-select" id="fmode"><option>By target</option></select></div>
<hr class="rule">
<div class="line"><label for="fpol">Cross-docking policy</label><select class="form-select" id="fpol"><option>Wait for truck</option></select></div>
</form>
</div>
</section>
</main>
</div>
<footer class="statusbar"><span>Editor</span><span>Licensed to 'ООО "Амальгама"'</span><div class="d-flex justify-content-between"><span>Version: 1.5.3</span><span>Memory Usage: 254 of 8192 MB</span></div></footer>
</div>
<script src="https://cdn.jsdelivr.net/npm/bootstrap@5.3.0/dist/js/bootstrap.bundle.min.js"></script>
</body>
</html>
